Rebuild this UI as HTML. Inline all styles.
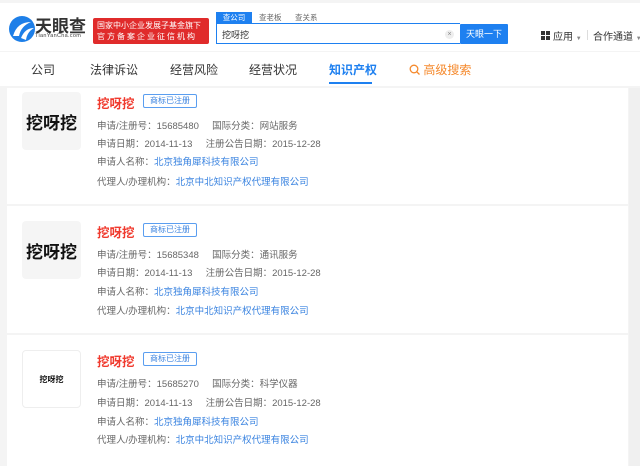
<!DOCTYPE html>
<html><head><meta charset="utf-8"><style>
*{margin:0;padding:0;box-sizing:border-box}
body{width:640px;height:466px;overflow:hidden;background:#f4f4f4;font-family:"Liberation Sans","Noto Sans CJK SC",sans-serif;position:relative;color:#333}
.a{position:absolute;white-space:nowrap}
.hdr{position:absolute;left:0;top:3px;width:640px;height:48px;background:#fff}
.nav{position:absolute;left:0;top:52px;width:640px;height:34px;background:#fff}
.nav span{position:absolute;top:9px;font-size:12px;color:#333}
.card{position:absolute;left:7px;width:621px;background:#fff}
.img{position:absolute;left:15px;top:4px;width:59px;height:58px;background:#f5f5f5;border-radius:4px;display:flex;align-items:center;justify-content:center;font-weight:bold;color:#111}
.t{position:absolute;left:90px;top:5px;font-size:12.5px;color:#f03a2e;font-weight:bold}
.b{position:absolute;left:136px;top:6px;width:54px;height:14px;border:1px solid #5a9ef0;border-radius:2px;font-size:8px;color:#3c84e0;text-align:center;line-height:12px}
.r{position:absolute;left:90px;font-size:9.5px;color:#666;white-space:nowrap}
.r i{font-style:normal;color:#3b84e0}
</style></head><body>
<div class="hdr"></div>
<svg class="a" style="left:7px;top:14px" width="30" height="30" viewBox="0 0 30 30"><circle cx="15" cy="15" r="13" fill="#1e7fe8"/><path d="M6 22 Q10 8 24 8 Q14 12 12 22 Z" fill="#fff"/><path d="M14 24 Q18 14 27 14 Q20 18 19 26 Z" fill="#fff"/></svg>
<div class="a" style="left:35px;top:12px;font-size:17px;font-weight:bold;color:#333">天眼查</div>
<div class="a" style="left:35px;top:33px;font-size:5.5px;color:#444;letter-spacing:.3px">TianYanCha.com</div>
<div class="a" style="left:93px;top:18px;width:116px;height:26px;background:#e02b2b;border-radius:2px;color:#fff;font-size:8px;line-height:11px;padding:2px 4px">国家中小企业发展子基金旗下<br><span style="letter-spacing:2px">官方备案企业征信机构</span></div>
<div class="a" style="left:216px;top:12px;width:36px;height:11px;background:#1e80f0;color:#fff;font-size:7.5px;text-align:center;line-height:11px">查公司</div>
<div class="a" style="left:259px;top:12px;font-size:7.5px;color:#666;line-height:11px">查老板</div>
<div class="a" style="left:295px;top:12px;font-size:7.5px;color:#666;line-height:11px">查关系</div>
<div class="a" style="left:216px;top:23px;width:244px;height:21px;border:1.5px solid #1e80f0;border-right:none;background:#fff"></div>
<div class="a" style="left:222px;top:28px;font-size:9px;color:#333">挖呀挖</div>
<div class="a" style="left:445px;top:30px;width:9px;height:9px;border-radius:50%;background:#eee;font-size:7px;color:#888;text-align:center;line-height:9px">×</div>
<div class="a" style="left:460px;top:24px;width:48px;height:20px;background:#1e80f0;color:#fff;font-size:9px;text-align:center;line-height:20px;border-radius:1px">天眼一下</div>
<svg class="a" style="left:541px;top:31px" width="9" height="9"><rect x="0" y="0" width="4" height="4" fill="#333"/><rect x="5" y="0" width="4" height="4" fill="#333"/><rect x="0" y="5" width="4" height="4" fill="#333"/><rect x="5" y="5" width="4" height="4" fill="#333"/></svg>
<div class="a" style="left:553px;top:28px;font-size:10px;color:#333">应用 <span style="font-size:6px;color:#888">▼</span></div>
<div class="a" style="left:587px;top:30px;width:1px;height:10px;background:#ddd"></div>
<div class="a" style="left:593px;top:28px;font-size:10px;color:#333">合作通道 <span style="font-size:6px;color:#888">▼</span></div>
<div class="nav">
<span style="left:31px">公司</span><span style="left:90px">法律诉讼</span><span style="left:170px">经营风险</span><span style="left:249px">经营状况</span>
<span style="left:329px;color:#1e80f0;font-weight:bold">知识产权</span>
<div class="a" style="left:329px;top:30px;width:43px;height:2px;background:#1e80f0"></div>
<span style="left:409px;color:#f5892c"><svg width="11" height="11" style="vertical-align:-1px"><circle cx="5" cy="5" r="3.8" stroke="#f5892c" stroke-width="1.3" fill="none"/><path d="M7.8 7.8 L10.5 10.5" stroke="#f5892c" stroke-width="1.3"/></svg> 高级搜索</span>
</div>
<div class="a" style="left:629px;top:88px;width:11px;height:378px;background:#f0f0f0"></div>

<div class="card" style="top:88px;height:116px">
<div class="img" style="font-size:17px">挖呀挖</div>
<div class="t">挖呀挖</div><div class="b">商标已注册</div>
<div class="r" style="top:30px">申请/注册号：15685480 &nbsp;&nbsp;&nbsp;&nbsp;国际分类：网站服务</div>
<div class="r" style="top:48px">申请日期：2014-11-13 &nbsp;&nbsp;&nbsp;&nbsp;注册公告日期：2015-12-28</div>
<div class="r" style="top:66px">申请人名称：<i>北京独角犀科技有限公司</i></div>
<div class="r" style="top:86px">代理人/办理机构：<i>北京中北知识产权代理有限公司</i></div>
</div>
<div class="card" style="top:206px;height:127px">
<div class="img" style="top:15px;font-size:17px">挖呀挖</div>
<div class="t" style="top:16px">挖呀挖</div><div class="b" style="top:17px">商标已注册</div>
<div class="r" style="top:41px">申请/注册号：15685348 &nbsp;&nbsp;&nbsp;&nbsp;国际分类：通讯服务</div>
<div class="r" style="top:59px">申请日期：2014-11-13 &nbsp;&nbsp;&nbsp;&nbsp;注册公告日期：2015-12-28</div>
<div class="r" style="top:78px">申请人名称：<i>北京独角犀科技有限公司</i></div>
<div class="r" style="top:97px">代理人/办理机构：<i>北京中北知识产权代理有限公司</i></div>
</div>
<div class="card" style="top:335px;height:131px">
<div class="img" style="top:15px;background:#fff;border:1px solid #eee;font-size:8px">挖呀挖</div>
<div class="t" style="top:16px">挖呀挖</div><div class="b" style="top:17px">商标已注册</div>
<div class="r" style="top:41px">申请/注册号：15685270 &nbsp;&nbsp;&nbsp;&nbsp;国际分类：科学仪器</div>
<div class="r" style="top:60px">申请日期：2014-11-13 &nbsp;&nbsp;&nbsp;&nbsp;注册公告日期：2015-12-28</div>
<div class="r" style="top:79px">申请人名称：<i>北京独角犀科技有限公司</i></div>
<div class="r" style="top:97px">代理人/办理机构：<i>北京中北知识产权代理有限公司</i></div>
</div>
</body></html>
